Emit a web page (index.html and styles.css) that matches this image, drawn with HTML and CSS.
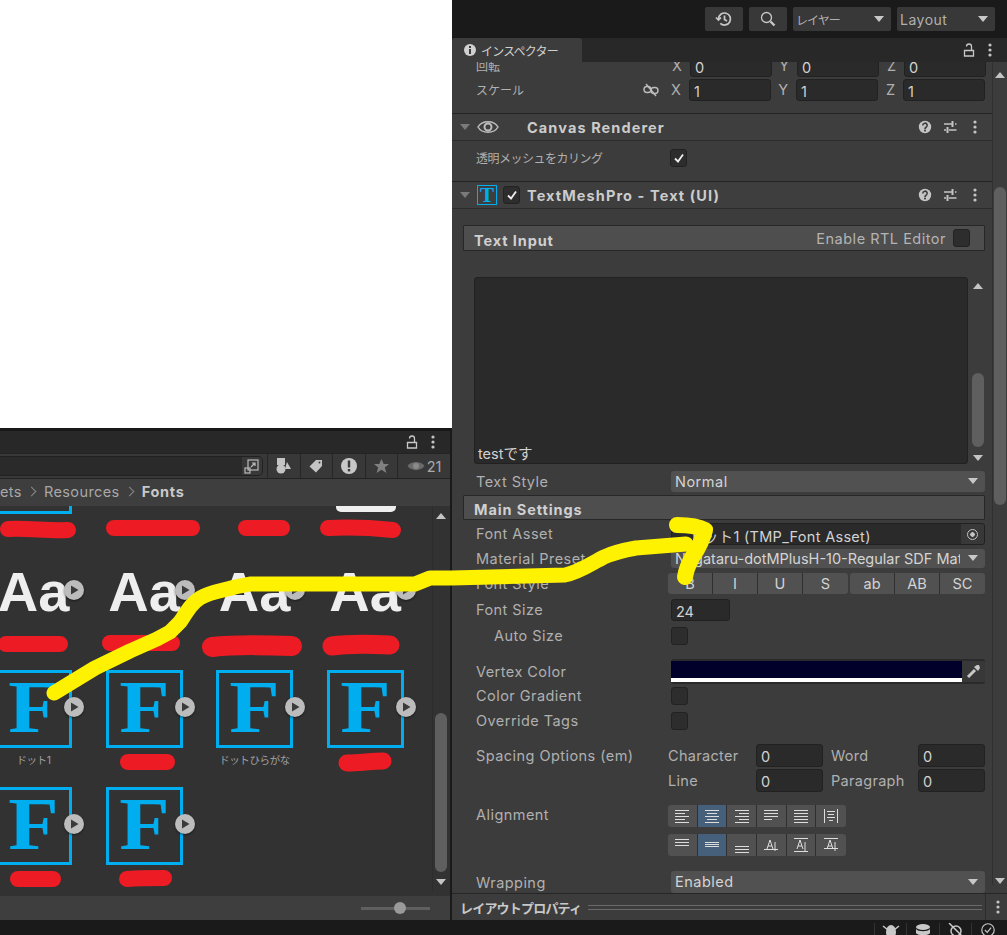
FILE: index.html
```html
<!DOCTYPE html>
<html lang="ja">
<head>
    <meta charset="UTF-8">
    <meta name="viewport" content="width=device-width, initial-scale=1.0">
    <title>Inspector</title>
    <link rel="stylesheet" href="styles.css">
</head>
<body>
    <svg class="sprite" width="0" height="0">
        <symbol id="dots" viewBox="0 0 4 14"><circle cx="2" cy="2" r="1.6"/><circle cx="2" cy="7" r="1.6"/><circle cx="2" cy="12" r="1.6"/></symbol>
        <symbol id="lock" viewBox="0 0 12 14"><path d="M1.5 7.5h9v5.5h-9z M8.500 7V3.500a2.500 2.500 0 0 0-5 0" fill="none" stroke="currentColor" stroke-width="1.3"/></symbol>
        <symbol id="help" viewBox="0 0 14 14"><circle cx="7" cy="7" r="6.2" fill="#c4c4c4"/><path d="M4.8 5.4a2.2 2.2 0 1 1 3.3 1.9c-.8.5-1.1.8-1.1 1.6" fill="none" stroke="#3c3c3c" stroke-width="1.6"/><rect x="6.1" y="9.6" width="1.8" height="1.8" fill="#3c3c3c"/></symbol>
        <symbol id="sliders" viewBox="0 0 14 14"><path d="M1 4h8M12 4h1.500M1 10h2M6 10h7.500" stroke="#c4c4c4" stroke-width="1.6" fill="none"/><path d="M9.500 1v6M4.500 7v6" stroke="#c4c4c4" stroke-width="2" fill="none"/></symbol>
        <symbol id="play" viewBox="0 0 20 20"><circle cx="10" cy="10" r="10" fill="#bcbcbc"/><path d="M7 5.500l7.500 4.500-7.500 4.500z" fill="#3a3a3a"/></symbol>
        <symbol id="caret" viewBox="0 0 10 6"><path d="M0 0h10l-5 6z"/></symbol>
        <symbol id="caret-up" viewBox="0 0 10 6"><path d="M0 6h10l-5-6z"/></symbol>
        <symbol id="tick" viewBox="0 0 12 12"><path d="M2 6.500l3 3 5-7" fill="none" stroke="#eee" stroke-width="1.800"/></symbol>
    </svg>

    <div class="editor">
        <section class="left">
            <div class="scene"></div>
            <div class="project">
                <div class="tabbar tabbar-project">
                    <svg class="tab-icon"><use href="#lock"/></svg>
                    <svg class="tab-dots"><use href="#dots"/></svg>
                </div>
                <div class="project-tools">
                    <div class="search">
                        <span class="search-btn">
                            <svg width="16" height="16" viewBox="0 0 16 16" fill="none" stroke="#bbb" stroke-width="1.200"><rect x="4" y="2" width="10" height="10"/><rect x="1" y="10" width="5" height="5"/><path d="M7 9l4-4M8 5h3v3"/></svg>
                        </span>
                    </div>
                    <span class="tool-btn">
                        <svg width="16" height="16" viewBox="0 0 16 16" fill="#c4c4c4"><rect x="1" y="0" width="8" height="7"/><circle cx="5" cy="11" r="4.500"/><path d="M11 4l4 7h-6z"/></svg>
                    </span>
                    <span class="tool-btn">
                        <svg width="14" height="14" viewBox="0 0 14 14" fill="#c4c4c4"><path d="M7 1h6v6l-6 6.500L.5 7.500z"/><circle cx="10.500" cy="3.500" r="1" fill="#3a3a3a"/></svg>
                    </span>
                    <span class="tool-btn">
                        <svg width="18" height="18" viewBox="0 0 18 18"><circle cx="9" cy="9" r="8" fill="#c8c8c8"/><rect x="7.800" y="3.500" width="2.400" height="7" fill="#3a3a3a"/><rect x="7.800" y="12" width="2.400" height="2.400" fill="#3a3a3a"/></svg>
                    </span>
                    <span class="tool-btn">
                        <svg width="15" height="15" viewBox="0 0 15 15" fill="#808080"><path d="M7.500 0l2.200 5h5.300l-4.200 3.400 1.600 5.600-4.900-3.200-4.900 3.200 1.600-5.600L0 5h5.300z"/></svg>
                    </span>
                    <span class="tool-btn tool-eye">
                        <svg width="18" height="12" viewBox="0 0 18 12"><path d="M.5 6C4 .5 14 .5 17.500 6 14 11.500 4 11.500 .5 6z" fill="#6a6a6a"/><circle cx="9" cy="6" r="3" fill="#8a8a8a"/></svg>
                        <span>21</span>
                    </span>
                </div>
                <div class="crumbs">
                    <span>ets</span><i class="chev"></i><span>Resources</span><i class="chev"></i><b>Fonts</b>
                </div>
                <div class="assets">
                    <div class="asset-grid">
                        <div class="tile"><div class="font-box"><span>F</span></div></div>
                        <div class="tile"></div>
                        <div class="tile"></div>
                        <div class="tile"><div class="white-thumb"></div></div>

                        <div class="tile"><div class="aa">Aa</div><svg class="play"><use href="#play"/></svg></div>
                        <div class="tile"><div class="aa">Aa</div><svg class="play"><use href="#play"/></svg></div>
                        <div class="tile"><div class="aa">Aa</div><svg class="play"><use href="#play"/></svg></div>
                        <div class="tile"><div class="aa">Aa</div><svg class="play"><use href="#play"/></svg></div>

                        <div class="tile"><div class="font-box"><span>F</span></div><svg class="play"><use href="#play"/></svg><p>ドット1</p></div>
                        <div class="tile"><div class="font-box"><span>F</span></div><svg class="play"><use href="#play"/></svg></div>
                        <div class="tile"><div class="font-box"><span>F</span></div><svg class="play"><use href="#play"/></svg><p>ドットひらがな</p></div>
                        <div class="tile"><div class="font-box"><span>F</span></div><svg class="play"><use href="#play"/></svg></div>

                        <div class="tile"><div class="font-box"><span>F</span></div><svg class="play"><use href="#play"/></svg></div>
                        <div class="tile"><div class="font-box"><span>F</span></div><svg class="play"><use href="#play"/></svg></div>
                    </div>
                    <div class="vscroll vscroll-assets">
                        <svg class="arrow"><use href="#caret-up"/></svg>
                        <div class="thumb thumb-assets"></div>
                        <svg class="arrow"><use href="#caret"/></svg>
                    </div>
                </div>
                <div class="project-foot">
                    <div class="zoom-slider"><span></span></div>
                </div>
            </div>
        </section>

        <section class="right">
            <div class="topbar">
                <span class="top-btn">
                    <svg width="18" height="16" viewBox="0 0 18 16" fill="none" stroke="#c8c8c8" stroke-width="1.700"><path d="M3.500 8a6 6 0 1 1 1.800 4.300"/><path d="M1 6.500l2.500 2.500L6 6.500"/><path d="M9.500 4.500V8.500l2.500 1.500"/></svg>
                </span>
                <span class="top-btn">
                    <svg width="16" height="16" viewBox="0 0 16 16" fill="none" stroke="#c8c8c8"><circle cx="6.500" cy="6.500" r="5" stroke-width="1.300"/><path d="M10.500 10.500l4 4" stroke-width="2.400"/></svg>
                </span>
                <span class="top-select top-layer">レイヤー<svg class="caret"><use href="#caret"/></svg></span>
                <span class="top-select top-layout">Layout<svg class="caret"><use href="#caret"/></svg></span>
            </div>

            <div class="tabbar">
                <div class="tab">
                    <svg width="12" height="12" viewBox="0 0 12 12"><circle cx="6" cy="6" r="6" fill="#d0d0d0"/><rect x="5" y="5" width="2" height="5" fill="#3c3c3c"/><rect x="5" y="2" width="2" height="2" fill="#3c3c3c"/></svg>
                    インスペクター
                </div>
                <svg class="tab-icon"><use href="#lock"/></svg>
                <svg class="tab-dots"><use href="#dots"/></svg>
            </div>

            <div class="inspector">
                <div class="props">
                    <div class="row row-rotation">
                        <label class="ja">回転</label>
                        <span class="axis">X</span><span class="field axis-field">0</span>
                        <span class="axis">Y</span><span class="field axis-field">0</span>
                        <span class="axis">Z</span><span class="field axis-field">0</span>
                    </div>
                    <div class="row row-scale">
                        <label class="ja">スケール</label>
                        <svg class="link-icon" width="16" height="14" viewBox="0 0 16 14" fill="none" stroke="#bdbdbd" stroke-width="1.400"><rect x="1" y="3.500" width="7" height="6" rx="3"/><rect x="8" y="4.500" width="7" height="6" rx="3"/><path d="M3 1l10 12"/></svg>
                        <span class="axis">X</span><span class="field axis-field">1</span>
                        <span class="axis">Y</span><span class="field axis-field">1</span>
                        <span class="axis">Z</span><span class="field axis-field">1</span>
                    </div>

                    <div class="comp-head comp-canvas">
                        <svg class="fold"><use href="#caret"/></svg>
                        <svg class="comp-icon" width="22" height="16" viewBox="0 0 22 16" fill="none" stroke="#bdbdbd"><path d="M1 8C5 1 17 1 21 8 17 15 5 15 1 8z" stroke-width="1.500"/><circle cx="11" cy="8" r="3.500" stroke-width="2"/></svg>
                        <h2>Canvas Renderer</h2>
                        <svg class="head-icon"><use href="#help"/></svg>
                        <svg class="head-icon"><use href="#sliders"/></svg>
                        <svg class="head-dots"><use href="#dots"/></svg>
                    </div>
                    <div class="row row-cull">
                        <label class="ja">透明メッシュをカリング</label>
                        <span class="check"><svg><use href="#tick"/></svg></span>
                    </div>

                    <div class="comp-head comp-tmp">
                        <svg class="fold"><use href="#caret"/></svg>
                        <span class="tmp-icon">T</span>
                        <span class="check check-head"><svg><use href="#tick"/></svg></span>
                        <h2>TextMeshPro - Text (UI)</h2>
                        <svg class="head-icon"><use href="#help"/></svg>
                        <svg class="head-icon"><use href="#sliders"/></svg>
                        <svg class="head-dots"><use href="#dots"/></svg>
                    </div>

                    <div class="band band-input">
                        <b>Text Input</b>
                        <span class="rtl">Enable RTL Editor</span>
                        <span class="check"></span>
                    </div>

                    <div class="text-area">
                        <div class="text-box">testです</div>
                        <div class="vscroll vscroll-text">
                            <svg class="arrow"><use href="#caret-up"/></svg>
                            <div class="thumb thumb-text"></div>
                            <svg class="arrow"><use href="#caret"/></svg>
                        </div>
                    </div>

                    <div class="row row-style">
                        <label>Text Style</label>
                        <span class="select">Normal<svg class="caret"><use href="#caret"/></svg></span>
                    </div>

                    <div class="band band-main"><b>Main Settings</b></div>

                    <div class="row row-asset">
                        <label>Font Asset</label>
                        <span class="field field-asset">
                            <span class="asset-name">ドット1 (TMP_Font Asset)</span>
                            <span class="target"><i></i></span>
                        </span>
                    </div>
                    <div class="row row-preset">
                        <label>Material Preset</label>
                        <span class="select select-preset"><span class="clip">Nagataru-dotMPlusH-10-Regular SDF Material</span><svg class="caret"><use href="#caret"/></svg></span>
                    </div>
                    <div class="row row-fontstyle">
                        <label>Font Style</label>
                        <span class="btn-group group-style"><span>B</span><span>I</span><span>U</span><span>S</span></span>
                        <span class="btn-group group-case"><span>ab</span><span>AB</span><span>SC</span></span>
                    </div>
                    <div class="row row-size">
                        <label>Font Size</label>
                        <span class="field field-size">24</span>
                    </div>
                    <div class="row row-auto">
                        <label class="indent">Auto Size</label>
                        <span class="check"></span>
                    </div>
                    <div class="row row-vertex">
                        <label>Vertex Color</label>
                        <span class="color-field">
                            <span class="swatch"><i></i></span>
                            <span class="picker">
                                <svg width="15" height="15" viewBox="0 0 15 15"><path d="M2 13l7-7" stroke="#c8c8c8" stroke-width="3"/><path d="M8 3l4 4 2-3-1-3-2 0z" fill="#c8c8c8"/></svg>
                            </span>
                        </span>
                    </div>
                    <div class="row row-check">
                        <label>Color Gradient</label>
                        <span class="check"></span>
                    </div>
                    <div class="row row-check">
                        <label>Override Tags</label>
                        <span class="check"></span>
                    </div>
                    <div class="row row-spacing">
                        <label>Spacing Options (em)</label>
                        <div class="spacing-grid">
                            <span>Character</span><span class="field">0</span>
                            <span class="second">Word</span><span class="field">0</span>
                            <span>Line</span><span class="field">0</span>
                            <span class="second">Paragraph</span><span class="field">0</span>
                        </div>
                    </div>
                    <div class="row row-align">
                        <label>Alignment</label>
                        <div class="align-rows">
                            <div class="btn-group group-align">
                                <span><svg width="16" height="16" viewBox="0 0 16 16" stroke="#ddd"><path d="M1 2.500h14M1 5.500h10M1 8.500h14M1 11.500h10M1 14.500h14"/></svg></span>
                                <span class="on"><svg width="16" height="16" viewBox="0 0 16 16" stroke="#ddd"><path d="M1 2.500h14M3 5.500h10M1 8.500h14M3 11.500h10M1 14.500h14"/></svg></span>
                                <span><svg width="16" height="16" viewBox="0 0 16 16" stroke="#ddd"><path d="M1 2.500h14M5 5.500h10M1 8.500h14M5 11.500h10M1 14.500h14"/></svg></span>
                                <span><svg width="16" height="16" viewBox="0 0 16 16" stroke="#ddd"><path d="M1 2.500h14M1 5.500h14M1 8.500h14M1 11.500h8"/></svg></span>
                                <span><svg width="16" height="16" viewBox="0 0 16 16" stroke="#ddd"><path d="M1 2.500h14M1 5.500h14M1 8.500h14M1 11.500h14M1 14.500h14"/></svg></span>
                                <span><svg width="16" height="16" viewBox="0 0 16 16" stroke="#ddd"><path d="M1.500 1v14M14.500 1v14M4 3.500h8M5 6.500h6M4 9.500h8M6 12.500h4"/></svg></span>
                            </div>
                            <div class="btn-group group-align">
                                <span><svg width="16" height="16" viewBox="0 0 16 16" stroke="#ddd"><path d="M1 2.500h14M1 5.500h14M1 8.500h14"/></svg></span>
                                <span class="on"><svg width="16" height="16" viewBox="0 0 16 16" stroke="#ddd"><path d="M1 5.500h14M1 7.500h14M1 9.500h14"/></svg></span>
                                <span><svg width="16" height="16" viewBox="0 0 16 16" stroke="#ddd"><path d="M1 9.500h14M1 12.500h14M1 15.500h14"/></svg></span>
                                <span><svg width="16" height="16" viewBox="0 0 16 16" stroke="#ddd" fill="none"><path d="M1 12.500h14M4 12L7 3l3 9M5 9h4M12 5v9"/></svg></span>
                                <span><svg width="16" height="16" viewBox="0 0 16 16" stroke="#ddd" fill="none"><path d="M1 1.500h14M1 14.500h14M4 12L7 3l3 9M5 9h4M12 5v9"/></svg></span>
                                <span><svg width="16" height="16" viewBox="0 0 16 16" stroke="#ddd" fill="none"><path d="M1 1.500h14M1 11.500h14M4 12L7 3l3 9M5 9h4M12 5v9"/></svg></span>
                            </div>
                        </div>
                    </div>
                    <div class="row row-wrap">
                        <label>Wrapping</label>
                        <span class="select">Enabled<svg class="caret"><use href="#caret"/></svg></span>
                    </div>
                </div>
                <div class="vscroll vscroll-main">
                    <svg class="arrow"><use href="#caret-up"/></svg>
                    <div class="thumb thumb-main"></div>
                    <svg class="arrow"><use href="#caret"/></svg>
                </div>
            </div>

            <div class="layout-bar">
                <b>レイアウトプロパティ</b>
                <span class="grip"></span>
                <svg class="tab-dots"><use href="#dots"/></svg>
            </div>
        </section>
    </div>

    <div class="statusbar">
        <svg width="18" height="14" viewBox="0 0 18 14" fill="#c8c8c8"><ellipse cx="9" cy="9" rx="5" ry="7"/><path d="M1 3l5 4M17 3l-5 4" stroke="#c8c8c8" stroke-width="1.500"/></svg>
        <svg width="18" height="14" viewBox="0 0 18 14" fill="#c8c8c8"><ellipse cx="9" cy="4" rx="7" ry="3"/><path d="M2 6c2 3 12 3 14 0v4c-2 3-12 3-14 0z"/></svg>
        <svg width="18" height="14" viewBox="0 0 18 14" fill="none" stroke="#c8c8c8" stroke-width="1.500"><circle cx="9" cy="8" r="5"/><path d="M2 0l14 14"/></svg>
        <svg width="18" height="14" viewBox="0 0 18 18" fill="none" stroke="#c8c8c8" stroke-width="1.500"><circle cx="9" cy="9" r="8"/><path d="M5 9l3 3 5-6"/></svg>
    </div>

    <!-- hand drawn marks on top of the screenshot -->
    <svg class="marks" width="1007" height="935" viewBox="0 0 1007 935" fill="none" stroke-linecap="round" stroke-linejoin="round">
        <g stroke="#ed1c24" stroke-width="16">
            <path d="M8 529c20-1 40 2 60 1"/>
            <path d="M114 528h78"/>
            <path d="M246 528h36"/>
            <path d="M328 528c20-1 45 0 65 2"/>
            <path d="M6 644h54"/>
            <path d="M110 643h62"/>
            <path d="M212 647c25-3 55-2 80-1" stroke-width="20"/>
            <path d="M332 646c20-3 40-2 58-1" stroke-width="19"/>
            <path d="M128 762h39"/>
            <path d="M347 763c12 0 25-2 36-2" stroke-width="17"/>
            <path d="M18 879h35"/>
            <path d="M127 879c12-1 25-1 37-1"/>
        </g>
        <g stroke="#fff200" stroke-width="15">
            <path d="M54 693L95 668 130 651 157 639 170 632 180 622C188 610 192 603 200 598 210 592 225 590 235 587L250 584H415L430 578H452L565 575C580 572 592 563 604 557 615 552 625 550 636 548L686 544"/>
            <path d="M677 525C688 525 698 526 705 530 703 538 699 547 693 556 689 563 686 570 685 577" stroke-width="16"/>
        </g>
    </svg>
</body>
</html>
```

FILE: styles.css
```css
* {
    box-sizing: border-box;
}

html, body {
    margin: 0;
    height: 100%;
}

body {
    position: relative;
    width: 1007px;
    height: 935px;
    overflow: hidden;
    background: #1a1a1a;
    color: #b0b0b0;
    font-family: Inter, "Noto Sans CJK JP", sans-serif;
    font-size: 14.5px;
}

svg {
    display: block;
    flex: none;
}

.sprite {
    position: absolute;
}

.editor {
    display: grid;
    grid-template-columns: 452px 555px;
    height: 920px;
}

/* left side */
.left {
    display: flex;
    flex-direction: column;
    min-width: 0;
    overflow: hidden;
}

.scene {
    flex: none;
    height: 431px;
    background: #fff;
    border-bottom: 3px solid #191919;
}

.project {
    width: 450px;
    height: 490px;
    display: flex;
    flex-direction: column;
}

.tabbar {
    display: flex;
    align-items: center;
    height: 24px;
    background: #282828;
    flex: none;
    color: #c8c8c8;
}

.tabbar-project {
    height: 22px;
    justify-content: flex-end;
}

.tab-icon {
    width: 12px;
    height: 14px;
    margin-right: 13px;
    color: #c8c8c8;
}

.tab-dots {
    width: 4px;
    height: 14px;
    margin-right: 15px;
    fill: #c4c4c4;
}

.tab {
    display: flex;
    align-items: center;
    gap: 5px;
    width: 130px;
    height: 24px;
    margin-right: auto;
    padding-left: 12px;
    background: #3c3c3c;
    border-radius: 3px 3px 0 0;
    font-size: 12px;
    color: #d0d0d0;
    letter-spacing: -0.8px;
}

.project-tools {
    display: flex;
    height: 26px;
    flex: none;
    background: #383838;
    border-top: 1px solid #232323;
    border-bottom: 1px solid #232323;
}

.search {
    display: flex;
    justify-content: flex-end;
    width: 263px;
    height: 20px;
    margin: 2px 4px 0 0;
    background: #2a2a2a;
    border: 1px solid #212121;
    border-left: 0;
    border-radius: 0 5px 5px 0;
}

.search-btn {
    display: flex;
    align-items: center;
    justify-content: center;
    width: 20px;
    background: #383838;
    border-radius: 0 4px 4px 0;
}

.tool-btn {
    display: flex;
    align-items: center;
    justify-content: center;
    width: 32.5px;
    border-left: 1px solid #262626;
}

.tool-eye {
    flex: 1;
    gap: 2px;
    color: #aaa;
}

.crumbs {
    display: flex;
    align-items: center;
    height: 27px;
    flex: none;
    padding-bottom: 3px;
    background: #3e3e3e;
    letter-spacing: 0.4px;
    color: #a8a8a8;
}

.crumbs b {
    color: #c8c8c8;
    letter-spacing: 0.7px;
}

.chev {
    width: 7px;
    height: 7px;
    margin: 0 9px 0 6px;
    border-top: 1.5px solid #888;
    border-right: 1.5px solid #888;
    transform: rotate(45deg);
}

.assets {
    display: flex;
    height: 390px;
    flex: none;
    overflow: hidden;
    background: #323232;
}

.asset-grid {
    display: grid;
    grid-template-columns: repeat(4, 77px);
    grid-auto-rows: 117px;
    column-gap: 33.5px;
    width: 437px;
    margin: -70px 0 0 -5px;
    flex: none;
    align-content: start;
}

.tile {
    position: relative;
    text-align: center;
}

.tile p {
    margin: 4px -20px 0;
    font-size: 10.5px;
    letter-spacing: -0.4px;
    color: #a0a0a0;
}

.font-box {
    width: 77px;
    height: 78px;
    border: 3px solid #00aeef;
    font: bold 75px/68px "Liberation Serif", serif;
    color: #00aeef;
    text-align: center;
}

.font-box span {
    display: block;
    transform: scaleX(1.1);
}

.aa {
    height: 78px;
    font: bold 56px/78px "Liberation Sans", sans-serif;
    color: #eeeeee;
    white-space: nowrap;
}

.white-thumb {
    width: 60px;
    height: 76px;
    margin-left: 9px;
    background: #efefef;
    border-radius: 0 0 5px 5px;
}

.play {
    position: absolute;
    left: 69px;
    top: 27px;
    width: 20px;
    height: 20px;
    filter: drop-shadow(0 1px 1px rgba(0, 0, 0, 0.5));
}

.project-foot {
    display: flex;
    justify-content: flex-end;
    align-items: center;
    height: 25px;
    flex: none;
    padding-right: 20px;
    background: #3e3e3e;
}

.zoom-slider {
    position: relative;
    width: 69px;
    height: 3px;
    background: #5f5f5f;
}

.zoom-slider span {
    position: absolute;
    left: 33px;
    top: -5px;
    width: 12px;
    height: 12px;
    border-radius: 50%;
    background: #9a9a9a;
}

.vscroll {
    display: flex;
    flex-direction: column;
    align-items: center;
    flex: none;
    fill: #c4c4c4;
}

.arrow {
    width: 10px;
    height: 6px;
    flex: none;
}

.thumb {
    width: 12px;
    background: #5f5f5f;
    border-radius: 6px;
}

.vscroll-assets {
    width: 16px;
    padding-top: 7px;
    height: 385px;
    border-left: 1px solid #2c2c2c;
}

.thumb-assets {
    height: 159px;
    margin: 194px 0 7px;
}

/* right side */
.right {
    display: flex;
    flex-direction: column;
    min-width: 0;
    background: #1a1a1a;
}

.topbar {
    display: flex;
    align-items: center;
    justify-content: flex-end;
    height: 38px;
    flex: none;
    padding-right: 12px;
}

.top-btn, .top-select {
    display: flex;
    align-items: center;
    height: 24px;
    background: #383838;
    border-radius: 2px;
}

.top-btn {
    justify-content: center;
    width: 38px;
    margin-right: 6px;
}

.top-select {
    justify-content: space-between;
    padding: 0 7px 0 3px;
    font-size: 14px;
    letter-spacing: 0.5px;
    color: #b0b0b0;
}

.top-layer {
    width: 98px;
    margin-right: 6px;
    font-size: 12px;
    letter-spacing: -1px;
}

.top-layout {
    width: 98px;
}

.caret {
    width: 10px;
    height: 6px;
    fill: #c8c8c8;
}

.inspector {
    display: flex;
    height: 831px;
    flex: none;
    overflow: hidden;
    background: #3c3c3c;
}

.props {
    width: 540px;
    flex: none;
}

.vscroll-main {
    width: 15px;
    padding-top: 10px;
    height: 823px;
    border-left: 1px solid #303030;
}

.thumb-main {
    height: 318px;
    margin: 109px 0 373px;
}

.row {
    display: flex;
    align-items: center;
    height: 22px;
    padding-left: 24px;
}

.row > label {
    width: 195px;
    flex: none;
    padding-bottom: 1px;
    letter-spacing: 0.45px;
    white-space: nowrap;
}

.row > label.indent {
    padding-left: 18px;
}

.row > label.ja {
    font-size: 12px;
    letter-spacing: 0;
}

.field {
    display: flex;
    align-items: center;
    height: 22px;
    padding: 2px 4px 0;
    background: #2a2a2a;
    border: 1px solid #212121;
    border-radius: 3px;
    color: #d2d2d2;
}

.axis {
    width: 25px;
    padding-right: 8px;
    padding-bottom: 2px;
    text-align: right;
    flex: none;
}

.axis-field {
    width: 82px;
}

.row-rotation {
    margin-top: -7px;
}

.row-rotation > label {
    width: 189px;
}

.row-scale {
    margin-top: 2px;
}

.row-scale > label {
    width: 167px;
}

.link-icon {
    margin-right: 5px;
}

.comp-head {
    display: flex;
    align-items: center;
    height: 28px;
    padding-left: 8px;
    background: #3e3e3e;
    border-top: 1px solid #232323;
    border-bottom: 1px solid #2c2c2c;
}

.comp-head h2 {
    margin: 0 auto 0 0;
    font-size: 14.5px;
    font-weight: 700;
    letter-spacing: 1.1px;
    color: #cccccc;
}

.comp-canvas {
    margin-top: 12px;
}

.fold {
    width: 10px;
    height: 6px;
    margin-right: 7px;
    fill: #7a7a7a;
}

.comp-icon {
    margin-right: 28px;
}

.tmp-icon {
    width: 20px;
    height: 20px;
    margin-right: 6px;
    border: 1px solid #00aeef;
    font: bold 21px/18px "Liberation Serif", serif;
    color: #00aeef;
    text-align: center;
    flex: none;
}

.head-icon {
    width: 14px;
    height: 14px;
    margin-right: 11px;
}

.head-dots {
    width: 4px;
    height: 14px;
    margin: 0 15px 0 5px;
    fill: #c4c4c4;
}

.check {
    display: flex;
    align-items: center;
    justify-content: center;
    width: 17px;
    height: 18px;
    flex: none;
    background: #2d2d2d;
    border: 1px solid #222;
    border-radius: 3px;
}

.check svg {
    width: 12px;
    height: 12px;
}

.check-head {
    margin-right: 7px;
}

.row-cull {
    margin: 6px 0 12px;
}

.row-cull > label.ja {
    width: 194px;
    letter-spacing: -0.5px;
}

.band {
    display: flex;
    align-items: center;
    width: 522px;
    margin-left: 11px;
    padding-left: 10px;
    background: #4e4e4e;
    border: 1px solid #272727;
    border-radius: 1px;
    color: #d0d0d0;
}

.band b {
    margin-right: auto;
    padding-top: 4px;
    letter-spacing: 0.9px;
}

.band-input {
    height: 26px;
    margin-top: 16px;
}

.rtl {
    margin-right: 7px;
    color: #b4b4b4;
    letter-spacing: 0.5px;
}

.band-input .check {
    margin-right: 14px;
}

.text-area {
    display: flex;
    margin: 26px 0 0 22px;
    height: 187px;
}

.text-box {
    display: flex;
    align-items: flex-end;
    width: 494px;
    padding: 0 3px;
    background: #2a2a2a;
    border: 1px solid #212121;
    border-radius: 3px;
    color: #d2d2d2;
}

.vscroll-text {
    width: 17px;
    padding-top: 6px;
    margin-left: 1px;
}

.thumb-text {
    height: 74px;
    margin: 84px 0 8px;
}

.select {
    display: flex;
    align-items: center;
    justify-content: space-between;
    width: 314px;
    height: 21px;
    padding: 0 7px 1px 4px;
    background: #515151;
    border-radius: 3px;
    color: #d4d4d4;
    letter-spacing: 0.5px;
}

.row-style {
    margin-top: 7px;
    height: 21px;
}

.band-main {
    height: 25px;
    margin-top: 3px;
}

.row-asset {
    margin-top: 3px;
}

.field-asset {
    width: 314px;
    padding: 0;
}

.asset-name {
    flex: 1;
    padding: 2px 0 0 17px;
    letter-spacing: 0.3px;
    white-space: nowrap;
}

.target {
    display: flex;
    align-items: center;
    justify-content: center;
    width: 23px;
    height: 100%;
    background: #383838;
    border-radius: 0 2px 2px 0;
}

.target i {
    width: 11px;
    height: 11px;
    border: 1.5px solid #c4c4c4;
    border-radius: 50%;
    background: radial-gradient(#c4c4c4 2px, transparent 2.5px);
}

.row-preset {
    margin-top: 4px;
    height: 19px;
}

.select-preset {
    height: 19px;
    letter-spacing: 0;
}

.clip {
    width: 285px;
    overflow: hidden;
    white-space: nowrap;
}

.row-fontstyle {
    margin-top: 5px;
    height: 21px;
}

.row-fontstyle > label {
    width: 192px;
}

.btn-group {
    display: flex;
    height: 21px;
    border-radius: 3px;
    overflow: hidden;
    flex: none;
}

.btn-group span {
    display: flex;
    align-items: center;
    justify-content: center;
    background: #515151;
    border-right: 1px solid #2f2f2f;
    color: #d4d4d4;
}

.btn-group span:last-child {
    border-right: 0;
}

.group-style span {
    width: 45px;
}

.group-style {
    margin-right: 2px;
}

.group-case span {
    width: 45px;
}

.row-size {
    margin-top: 5px;
}

.field-size {
    width: 59px;
}

.row-auto {
    margin-top: 5px;
    height: 20px;
}

.row-vertex {
    margin: 13px 0 -3px;
    height: 25px;
}

.color-field {
    display: flex;
    width: 314px;
    height: 25px;
    background: #383838;
    border-top: 2px solid #2a2a2a;
    border-bottom: 2px solid #2a2a2a;
    border-radius: 3px;
}

.swatch {
    display: flex;
    flex-direction: column;
    justify-content: flex-end;
    width: 291px;
    background: #00002a;
}

.swatch i {
    height: 4px;
    background: #fff;
}

.picker {
    display: flex;
    align-items: center;
    justify-content: center;
    flex: 1;
}

.row-check {
    margin-top: 5px;
    height: 20px;
}

.row-spacing {
    align-items: flex-start;
    height: 48px;
    margin-top: 13px;
}

.row-spacing > label {
    width: 192px;
    padding-top: 3px;
}

.spacing-grid {
    display: grid;
    grid-template-columns: 88px 67px 95px 67px;
    grid-auto-rows: 23px;
    row-gap: 2px;
    align-items: center;
    letter-spacing: 0.3px;
}

.spacing-grid .second {
    padding-left: 8px;
}

.spacing-grid .field {
    height: 23px;
}

.row-align {
    align-items: flex-start;
    height: 51px;
    margin-top: 13px;
}

.row-align > label {
    width: 192px;
    padding-top: 1px;
}

.align-rows {
    display: flex;
    flex-direction: column;
    gap: 7px;
}

.group-align {
    height: 22px;
}

.group-align span {
    width: 29.67px;
}

.group-align span.on {
    background: #46607c;
}

.row-wrap {
    margin-top: 16px;
    height: 20px;
}

.row-wrap > label {
    padding-bottom: 0;
}

.row-wrap .select {
    height: 22px;
    flex: none;
}

.layout-bar {
    display: flex;
    align-items: center;
    height: 27px;
    flex: none;
    padding-left: 8px;
    background: #3c3c3c;
    border-top: 1px solid #262626;
    font-size: 13px;
    color: #c8c8c8;
    letter-spacing: -0.8px;
    white-space: nowrap;
}

.grip {
    width: 394px;
    height: 5px;
    margin: 0 3px 0 7px;
    flex: none;
    border-top: 1px solid #6a6a6a;
    border-bottom: 1px solid #6a6a6a;
}

.layout-bar .tab-dots {
    box-sizing: content-box;
    height: 26px;
    margin-right: 7px;
    padding-left: 10px;
    border-left: 1px solid #2c2c2c;
}

.statusbar {
    display: flex;
    justify-content: flex-end;
    gap: 6.5px;
    height: 15px;
    padding: 3px 10px 0 0;
    overflow: hidden;
}

.statusbar svg {
    box-sizing: content-box;
    padding-left: 7px;
    border-left: 1px solid #333;
}

.marks {
    position: absolute;
    left: 0;
    top: 0;
    pointer-events: none;
}
```
